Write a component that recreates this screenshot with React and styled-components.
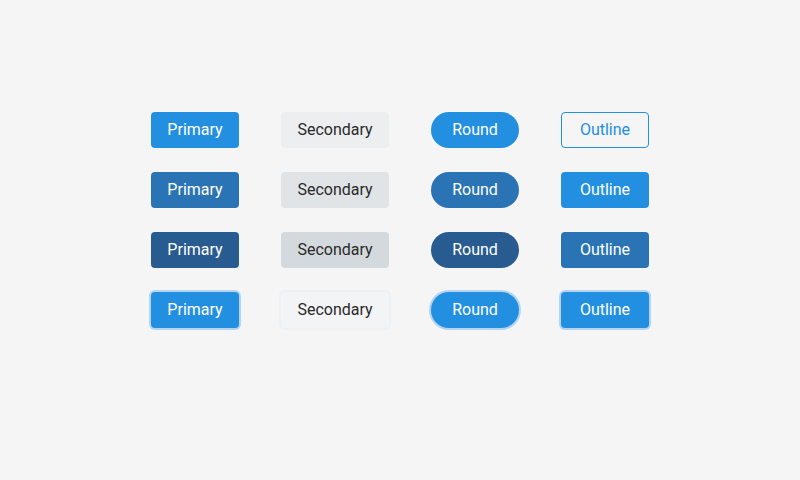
import React from "react";
import styled, { createGlobalStyle, css } from "styled-components";

const GlobalStyle = createGlobalStyle`
  html, body {
    margin: 0;
    padding: 0;
    background: #f5f5f5;
    font-family: Roboto, "Noto Sans", Arial, sans-serif;
  }
`;

const Page = styled.div`
  width: 800px;
  height: 480px;
  box-sizing: border-box;
  padding-top: 112px;
  display: flex;
  justify-content: center;
  align-items: flex-start;
`;

const Grid = styled.div`
  display: grid;
  grid-template-columns: 88px 108px 88px 88px;
  grid-auto-rows: 36px;
  column-gap: 42px;
  row-gap: 24px;
`;

const palettes = {
  primary: {
    normal: css`background: #238fe0; color: #fff;`,
    hover: css`background: #2a74b6; color: #fff;`,
    active: css`background: #285b8f; color: #fff;`,
    focus: css`background: #238fe0; color: #fff; box-shadow: 0 0 0 2px #b3d5f2;`,
  },
  secondary: {
    normal: css`background: #eceef0; color: #2a2a2a;`,
    hover: css`background: #e1e4e7; color: #2a2a2a;`,
    active: css`background: #d3d9dc; color: #2a2a2a;`,
    focus: css`background: #f3f4f6; color: #2a2a2a; box-shadow: 0 0 0 2px #eef0f2;`,
  },
  outline: {
    normal: css`background: transparent; color: #238fe0; border: 1px solid #238fe0;`,
    hover: css`background: #238fe0; color: #fff;`,
    active: css`background: #2a74b6; color: #fff;`,
    focus: css`background: #238fe0; color: #fff; box-shadow: 0 0 0 2px #b3d5f2;`,
  },
};

const Button = styled.button`
  box-sizing: border-box;
  width: 100%;
  height: 36px;
  border: none;
  border-radius: ${(p) => (p.$round ? "18px" : "4px")};
  font-family: Roboto, "Noto Sans", Arial, sans-serif;
  font-size: 16px;
  padding: 0 0 2px;
  cursor: pointer;
  ${(p) => palettes[p.$kind][p.$state]}
`;

const rows = ["normal", "hover", "active", "focus"];

export default function App() {
  return (
    <>
      <GlobalStyle />
      <Page>
        <Grid>
          {rows.map((state) => (
            <React.Fragment key={state}>
              <Button $kind="primary" $state={state}>Primary</Button>
              <Button $kind="secondary" $state={state}>Secondary</Button>
              <Button $kind="primary" $state={state} $round>Round</Button>
              <Button $kind="outline" $state={state}>Outline</Button>
            </React.Fragment>
          ))}
        </Grid>
      </Page>
    </>
  );
}
